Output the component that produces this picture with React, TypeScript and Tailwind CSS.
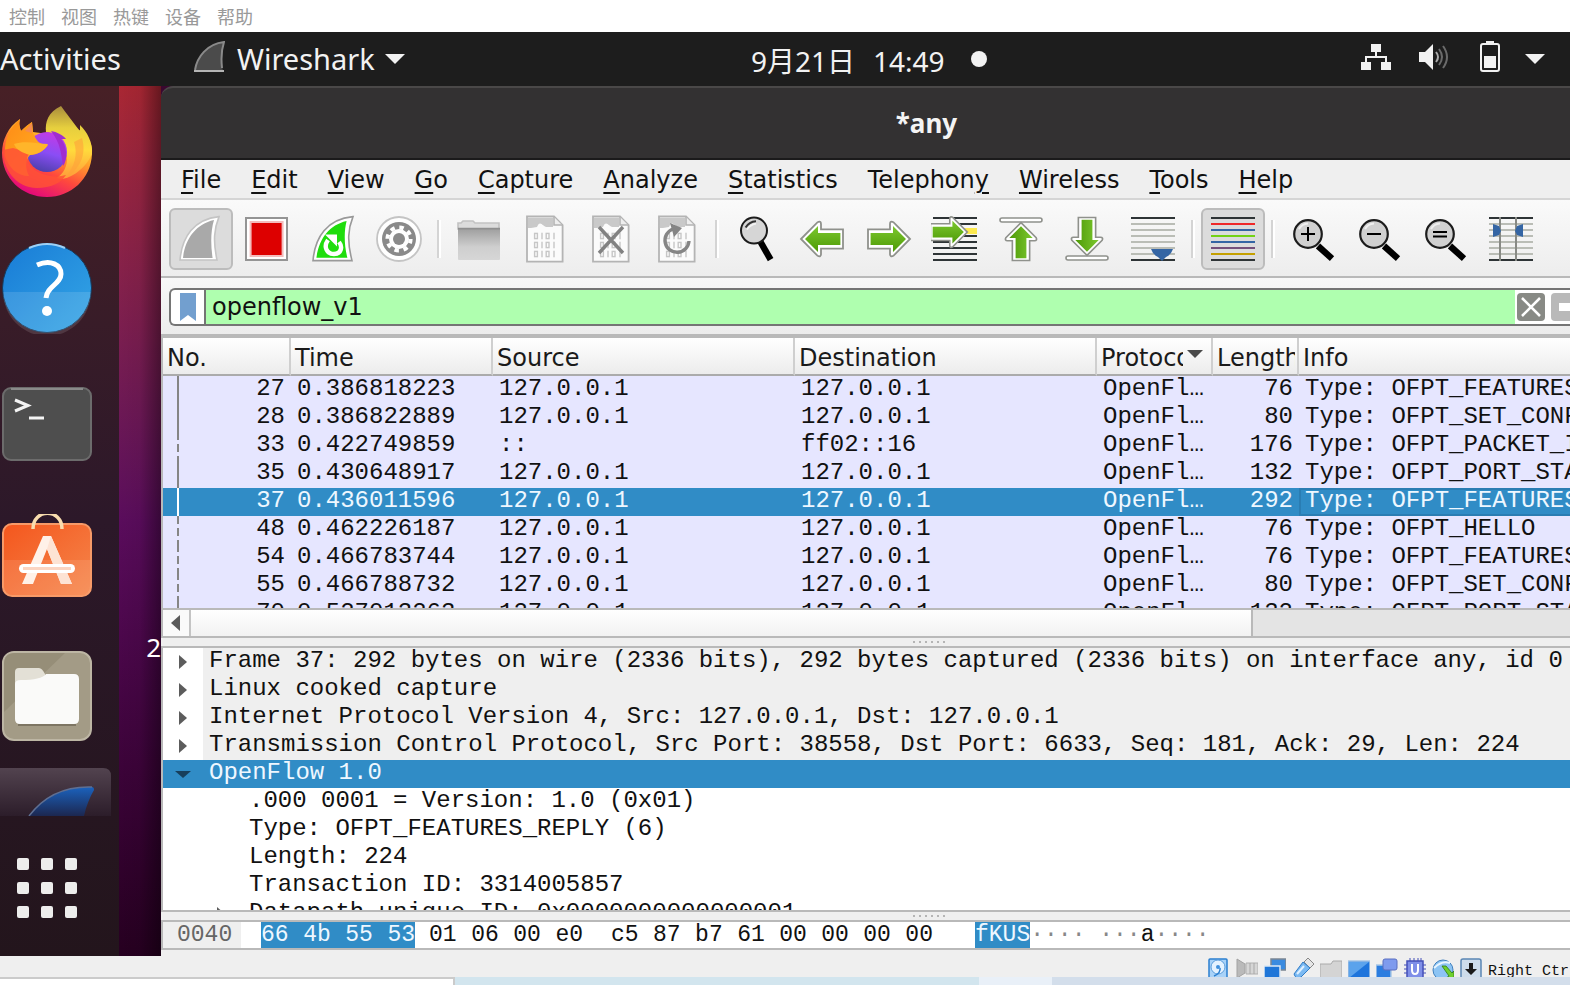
import type { ReactNode } from 'react';

const hostMenus = ['控制', '视图', '热键', '设备', '帮助'];

const menus = [
  ['', 'F', 'ile'],
  ['', 'E', 'dit'],
  ['', 'V', 'iew'],
  ['', 'G', 'o'],
  ['', 'C', 'apture'],
  ['', 'A', 'nalyze'],
  ['', 'S', 'tatistics'],
  ['Telephon', 'y', ''],
  ['', 'W', 'ireless'],
  ['', 'T', 'ools'],
  ['', 'H', 'elp'],
];

const packets = [
  { no: 27, time: '0.386818223', src: '127.0.0.1', dst: '127.0.0.1', len: 76, info: 'OFPT_FEATURES_REQUEST', solid: true },
  { no: 28, time: '0.386822889', src: '127.0.0.1', dst: '127.0.0.1', len: 80, info: 'OFPT_SET_CONFIG', solid: true },
  { no: 33, time: '0.422749859', src: '::', dst: 'ff02::16', len: 176, info: 'OFPT_PACKET_IN', solid: false },
  { no: 35, time: '0.430648917', src: '127.0.0.1', dst: '127.0.0.1', len: 132, info: 'OFPT_PORT_STATUS', solid: true },
  { no: 37, time: '0.436011596', src: '127.0.0.1', dst: '127.0.0.1', len: 292, info: 'OFPT_FEATURES_REPLY', solid: true, selected: true },
  { no: 48, time: '0.462226187', src: '127.0.0.1', dst: '127.0.0.1', len: 76, info: 'OFPT_HELLO', solid: false },
  { no: 54, time: '0.466783744', src: '127.0.0.1', dst: '127.0.0.1', len: 76, info: 'OFPT_FEATURES_REQUEST', solid: false },
  { no: 55, time: '0.466788732', src: '127.0.0.1', dst: '127.0.0.1', len: 80, info: 'OFPT_SET_CONFIG', solid: false },
  { no: 70, time: '0.527013263', src: '127.0.0.1', dst: '127.0.0.1', len: 132, info: 'OFPT_PORT_STATUS', solid: false },
];

const layers = [
  'Frame 37: 292 bytes on wire (2336 bits), 292 bytes captured (2336 bits) on interface any, id 0',
  'Linux cooked capture',
  'Internet Protocol Version 4, Src: 127.0.0.1, Dst: 127.0.0.1',
  'Transmission Control Protocol, Src Port: 38558, Dst Port: 6633, Seq: 181, Ack: 29, Len: 224',
];

const fields = [
  '.000 0001 = Version: 1.0 (0x01)',
  'Type: OFPT_FEATURES_REPLY (6)',
  'Length: 224',
  'Transaction ID: 3314005857',
];

/* ---------- dock icons ---------- */

const Firefox = () => (
  <svg viewBox="0 0 92 92" className="size-[92px]">
    <defs>
      <linearGradient id="ffBody" x1="0.85" y1="0.1" x2="0.35" y2="1">
        <stop offset="0" stopColor="#ffe23e" />
        <stop offset="0.35" stopColor="#ffa52b" />
        <stop offset="0.65" stopColor="#ff4a3c" />
        <stop offset="1" stopColor="#e2077c" />
      </linearGradient>
      <linearGradient id="ffFlame" x1="0" y1="0" x2="0" y2="1">
        <stop offset="0" stopColor="#a88c3c" />
        <stop offset="0.3" stopColor="#e6cf3e" />
        <stop offset="0.6" stopColor="#ffdb3c" />
        <stop offset="1" stopColor="#ff9a3a" />
      </linearGradient>
      <linearGradient id="ffGlobe" x1="0.6" y1="0" x2="0.3" y2="1">
        <stop offset="0" stopColor="#c43ae6" />
        <stop offset="0.5" stopColor="#8a4df5" />
        <stop offset="1" stopColor="#4b3fa8" />
      </linearGradient>
      <linearGradient id="ffHead" x1="0" y1="0" x2="1" y2="1">
        <stop offset="0" stopColor="#ff8a16" />
        <stop offset="1" stopColor="#ffb422" />
      </linearGradient>
    </defs>
    <path d="M19 13 C18 17 18 19 20 25 C24 21 28 18 31 16 L32 26 L47 28 L78 24 C87 30 92 38 91 48 C90 73 70 91 46 91 C21 91 1 72 1 47 C1 34 7 21 19 13Z" fill="url(#ffBody)" />
    <path d="M60 0 C47 6 44 16 45 26 C56 28 64 36 66 50 C67 60 62 68 56 72 C66 76 84 64 91 48 C92 36 86 26 79 19 L79 25 C71 15 66 8 60 0Z" fill="url(#ffFlame)" />
    <path d="M81 32 C86 50 78 64 64 72 C74 60 77 48 73 36Z" fill="#ffa13a" opacity="0.6" />
    <circle cx="46" cy="46" r="20" fill="url(#ffGlobe)" />
    <path d="M50 25 C56 26 62 29 65 33 L60 33 C66 40 67 54 62 60 C60 48 60 38 50 25Z" fill="#a02ed0" />
    <path d="M19 13 C9 22 3 32 4 50 C8 62 16 70 28 70 C24 62 24 54 29 49 C36 49 44 44 47 39 C38 39 35 34 32 27 L31 16 C28 18 24 21 20 25 C18 19 18 17 19 13Z" fill="url(#ffHead)" />
    <path d="M2 44 C2 62 14 82 36 82 C50 82 60 77 65 69 C52 73 34 68 28 58 C25 54 26 50 29 47 L12 42Z" fill="#ff5136" opacity="0.85" />
    <path d="M13 38 C24 34 38 38 47 38 C43 46 36 48 29 49 C22 47 15 44 13 38Z" fill="#ffb52a" />
    <path d="M31 17 L24 25 L31 27Z" fill="#f48a50" />
  </svg>
);

const Help = () => (
  <svg viewBox="0 0 92 92" className="size-[92px]">
    <defs>
      <linearGradient id="helpBg" x1="0" y1="0" x2="1" y2="1">
        <stop offset="0" stopColor="#187bd6" />
        <stop offset="1" stopColor="#34a6e6" />
      </linearGradient>
    </defs>
    <circle cx="46" cy="46" r="44.5" fill="url(#helpBg)" stroke="#173a5c" strokeWidth="1" />
    <path d="M2 50 H90 A44 44 0 0 1 2 50Z" fill="#fff" opacity="0.12" />
    <path d="M28 6 A43.500 43.500 0 0 1 64 6" fill="none" stroke="#9ed0f5" strokeWidth="2" />
    <path d="M36 23 C50 17 60 23 60 32 C60 42 46 44 45 56" fill="none" stroke="#fff" strokeWidth="5" />
    <circle cx="46" cy="69" r="5" fill="#fff" />
  </svg>
);

const Terminal = () => (
  <svg viewBox="0 0 92 92" className="size-[92px]">
    <rect x="2" y="10" width="88" height="72" rx="8" fill="#4e4e4e" stroke="#6c6c6c" strokeWidth="2" />
    <path d="M10 11 H82" stroke="#8a8a8a" strokeWidth="2" />
    <path d="M14 22 L27 27.500 L14 33" fill="none" stroke="#f4f4f4" strokeWidth="3" />
    <path d="M28 40 H43" stroke="#f4f4f4" strokeWidth="3" />
  </svg>
);

const Software = () => (
  <svg viewBox="0 0 92 92" className="size-[92px]">
    <defs>
      <linearGradient id="swBg" x1="0" y1="0" x2="1" y2="1">
        <stop offset="0" stopColor="#f4561d" />
        <stop offset="1" stopColor="#f5874c" />
      </linearGradient>
    </defs>
    <rect x="2" y="10" width="88" height="72" rx="9" fill="url(#swBg)" stroke="#f79a68" strokeWidth="2" />
    <path d="M3 46 H89 V74 Q89 81 81 81 H11 Q3 81 3 74Z" fill="#fff" opacity="0.1" />
    <path d="M32 15 C32 -6 61 -6 61 15" fill="none" stroke="#f8dcae" strokeWidth="3.500" />
    <path d="M42 22 H50 L71 70 H60 L46 35 L32 70 H21Z" fill="#fff1e8" />
    <path d="M50 22 L71 70 H60 L46 35Z" fill="#fde3d4" />
    <rect x="18" y="50" width="56" height="9" rx="4.500" fill="#fff" />
    <rect x="22" y="53" width="48" height="3" fill="#fbd5c2" />
  </svg>
);

const Files = () => (
  <svg viewBox="0 0 92 92" className="size-[92px]">
    <rect x="2" y="2" width="88" height="88" rx="11" fill="#a39b86" stroke="#bdb6a4" strokeWidth="2" />
    <path d="M3 62 L64 3 H14 Q3 3 3 14Z" fill="#968e78" />
    <path d="M14 40 V22 Q14 18 18 18 H38 Q41 18 44 24 V40Z" fill="#e3e0d6" />
    <path d="M14 34 Q14 30 20 30 Q40 30 45 24 H73 Q78 24 78 29 V69 Q78 74 73 74 H19 Q14 74 14 69Z" fill="#fafaf9" />
    <path d="M17 75 H75" stroke="#7d7563" strokeWidth="2" />
  </svg>
);

const DockFin = () => (
  <svg viewBox="0 0 111 48" className="h-12 w-[111px]">
    <defs>
      <linearGradient id="dockTile" x1="0" y1="0" x2="0" y2="1">
        <stop offset="0" stopColor="#52434f" />
        <stop offset="1" stopColor="#2c1d2a" />
      </linearGradient>
      <linearGradient id="dockFin" x1="0" y1="0" x2="0" y2="1">
        <stop offset="0" stopColor="#1b62bd" />
        <stop offset="1" stopColor="#1c2750" />
      </linearGradient>
    </defs>
    <path d="M0 0 H103 Q111 0 111 8 V48 H0Z" fill="url(#dockTile)" />
    <path d="M29 48 C44 28 66 18 92 19 Q94 19 94 22 C90 29 86 38 84 48Z" fill="url(#dockFin)" />
    <path d="M29 48 C44 28 66 18 92 19" fill="none" stroke="#5f6f92" strokeWidth="1.500" />
  </svg>
);

const AppGrid = () => (
  <svg viewBox="0 0 62 62" className="size-[62px]" fill="#ededec">
    {[0, 24, 48].map((y) => [0, 24, 48].map((x) => <rect key={`${x}-${y}`} x={x + 1} y={y + 1} width="12" height="12" rx="2" />))}
  </svg>
);

/* ---------- toolbar icons, drawn on a 24 unit grid ---------- */

const Icon = ({ children }: { children: ReactNode }) => (
  <svg viewBox="0 0 24 24" className="size-12" fill="none">
    {children}
  </svg>
);

const finPath = 'M1.500 22.500 C2.500 11 8.500 2 21 0.800 C18.500 7 18 13 20 22.500Z';
const arrowPath = 'M1.500 12 L9.800 3.600 Q11.500 2.800 11.500 4.500 V7.200 H22.500 V16.800 H11.500 V19.500 Q11.500 21.200 9.800 20.400Z';
const arrowInner = 'M3.500 12 L10 5.500 V9 H21.200 V15 H10 V18.500Z';

const Arrow = ({ transform }: { transform?: string }) => (
  <g transform={transform}>
    <path d={arrowPath} fill="#fff" stroke="#8f918c" strokeWidth="0.9" />
    <path d={arrowInner} fill="url(#green)" />
  </g>
);

const Doc = ({ children }: { children?: ReactNode }) => (
  <Icon>
    <path d="M3 0.700 H16.500 L20.800 5 V23.300 H3Z" fill="#fbfbfb" stroke="#b4b4b4" strokeWidth="0.9" />
    <path d="M3.500 1.200 H16 V6 H13 C11 6 9.500 2 8 6 L5 6.500 H3.500Z" fill="#c9c9c9" />
    <path d="M16.500 1 V5 H20.500" fill="#eee" stroke="#b4b4b4" strokeWidth="0.8" />
    {[9.2, 13.7, 18.2].map((y) => (
      <g key={y} stroke="#c6c6c6" strokeWidth="0.7">
        <rect x="6.800" y={y} width="1.400" height="2.600" />
        <path d={`M10.500 ${y - 0.3} v3.200`} />
        <rect x="12.600" y={y} width="1.400" height="2.600" />
        <path d={`M16.500 ${y - 0.3} v3.200`} />
      </g>
    ))}
    {children}
  </Icon>
);

const Glass = ({ children }: { children?: ReactNode }) => (
  <Icon>
    <path d="M14.500 15.500 L21.500 21.800" stroke="#000" strokeWidth="3.200" />
    <circle cx="9.500" cy="9.500" r="6.900" fill="#d0d0d0" stroke="#1c1c1c" strokeWidth="1.100" />
    <path d="M5 7 Q6.500 4.300 9.500 4.200" stroke="#efefef" strokeWidth="1" />
    <g stroke="#000" strokeWidth="1">{children}</g>
  </Icon>
);

const Lines = ({ colors }: { colors: string[] }) => (
  <>
    {colors.map((color, i) => (
      <path key={i} d={`M1 ${1.5 + i * 3} H23`} stroke={color} strokeWidth="1" />
    ))}
  </>
);

const grayLines = ['#2e3436', '#babdb6', '#babdb6', '#babdb6', '#babdb6', '#babdb6', '#babdb6', '#2e3436'];

const toolbar: { label: string; pressed?: boolean; icon: ReactNode }[][] = [
  [
    {
      label: 'Start capturing packets',
      pressed: true,
      icon: (
        <Icon>
          <path d={finPath} fill="#fff" stroke="#c4c4c4" strokeWidth="0.8" />
          <path d="M3 21.500 C4 12 9.500 4.500 18.500 2.500 C16.800 8 16.800 15 17.800 21.500Z" fill="#a9a9a9" />
        </Icon>
      ),
    },
    {
      label: 'Stop capturing packets',
      icon: (
        <Icon>
          <rect x="1.500" y="1.500" width="20.500" height="21" fill="#fff" stroke="#949494" />
          <rect x="3.800" y="3.500" width="16" height="17" fill="#d00" stroke="#f3bcbc" />
        </Icon>
      ),
    },
    {
      label: 'Restart current capture',
      icon: (
        <Icon>
          <path d="M2 22.800 C3 11 9 2 22 0.800 C19.500 7 19 13 21.500 22.800Z" fill="#fff" stroke="#999" strokeWidth="0.8" />
          <path d="M3.700 21.400 C5 12 10 5 18.800 3 C17.500 8 17.500 15 19.200 21.400Z" fill="#1fdd0d" />
          <path d="M9.500 12.500 C7 16 9 19.500 12.500 19.500 C16 19.500 17 16 15 13.500" stroke="#fff" strokeWidth="2.200" />
          <path d="M8 9.800 H14 V15.800Z" fill="#fff" />
        </Icon>
      ),
    },
    {
      label: 'Capture options',
      icon: (
        <Icon>
          <circle cx="12" cy="12" r="11" fill="#fff" stroke="#c4c4c4" strokeWidth="0.9" />
          <circle cx="12" cy="12" r="8.500" fill="#8a8a8a" />
          <circle cx="12" cy="12" r="5" fill="#fff" />
          <circle cx="12" cy="12" r="5.800" stroke="#fff" strokeWidth="2" strokeDasharray="2.200 2.355" />
          <circle cx="12" cy="12" r="3" fill="#8a8a8a" />
        </Icon>
      ),
    },
  ],
  [
    {
      label: 'Open a capture file',
      icon: (
        <Icon>
          <path d="M1.500 7 V4 H3 L4 3 H9 L10 4 H22 V7Z" fill="#dcdcdc" stroke="#c2c2c2" strokeWidth="0.800" />
          <rect x="1.500" y="6.500" width="21" height="16" rx="0.500" fill="url(#folder)" />
          <path d="M1.500 6.800 H22.500" stroke="#8f8f8f" strokeWidth="0.800" />
        </Icon>
      ),
    },
    { label: 'Save this capture file', icon: <Doc /> },
    {
      label: 'Close this capture file',
      icon: (
        <Doc>
          <path d="M6 6 L18 19 M18 6 L6 19" stroke="#828282" strokeWidth="1.700" />
        </Doc>
      ),
    },
    {
      label: 'Reload this file',
      icon: (
        <Doc>
          <path d="M10 7 A6 6 0 1 0 18 13" stroke="#858585" strokeWidth="1.700" />
          <path d="M8.500 4 L14.500 6.500 L10.500 11Z" fill="#858585" />
        </Doc>
      ),
    },
  ],
  [
    {
      label: 'Find a packet',
      icon: (
        <Icon>
          <path d="M13.500 13 L18.800 22.300" stroke="#000" strokeWidth="3.200" />
          <circle cx="10.500" cy="7.800" r="6.500" fill="#d6d6d6" stroke="#1c1c1c" strokeWidth="1" />
          <path d="M6.300 6.300 Q8 3.300 11.500 3.100" stroke="#333" strokeWidth="1" />
          <path d="M7 7.300 Q8.500 4.800 11.500 4.300" stroke="#f3f3f3" strokeWidth="0.800" />
        </Icon>
      ),
    },
    { label: 'Go back in packet history', icon: <Icon><Arrow transform="translate(-0.500 0)" /></Icon> },
    { label: 'Go forward in packet history', icon: <Icon><Arrow transform="matrix(-1 0 0 1 24 0)" /></Icon> },
    {
      label: 'Go to specified packet',
      icon: (
        <Icon>
          <Lines colors={['#2e3436', '#2e3436', '#fce94f', '#2e3436', '#2e3436', '#2e3436', '#2e3436', '#2e3436']} />
          <path d="M14 8 H23" stroke="#fce94f" strokeWidth="3" />
          <Arrow transform="matrix(-0.880 0 0 0.880 19.500 -2)" />
        </Icon>
      ),
    },
    {
      label: 'Go to the first packet',
      icon: (
        <Icon>
          <rect x="1.500" y="1.500" width="21" height="2" rx="1" fill="#fff" stroke="#8f918c" strokeWidth="0.800" />
          <Arrow transform="matrix(0 0.900 -0.900 0 22.800 2.500)" />
        </Icon>
      ),
    },
    {
      label: 'Go to the last packet',
      icon: (
        <Icon>
          <rect x="1.500" y="20.500" width="21" height="2" rx="1" fill="#fff" stroke="#8f918c" strokeWidth="0.800" />
          <Arrow transform="matrix(0 -0.900 -0.900 0 22.800 21.500)" />
        </Icon>
      ),
    },
    {
      label: 'Auto scroll in live capture',
      icon: (
        <Icon>
          <Lines colors={grayLines} />
          <path d="M11 17 H22 Q21 20 18.500 21 L16.500 23 L14.500 21 Q12 20 11 17Z" fill="#3465a4" />
        </Icon>
      ),
    },
  ],
  [
    {
      label: 'Colorize packet list',
      pressed: true,
      icon: (
        <Icon>
          <Lines colors={['#2e3436', '#ef2929', '#3465a4', '#73d216', '#3465a4', '#75507b', '#c4a000', '#2e3436']} />
        </Icon>
      ),
    },
  ],
  [
    { label: 'Zoom in', icon: <Glass><path d="M6 9.500 H13 M9.500 6 V13" /></Glass> },
    { label: 'Zoom out', icon: <Glass><path d="M6 9.500 H13" /></Glass> },
    { label: 'Normal size', icon: <Glass><path d="M6 8.500 H13 M6 10.800 H13" /></Glass> },
    {
      label: 'Resize columns',
      icon: (
        <Icon>
          <Lines colors={grayLines} />
          <path d="M6.500 1 V23 M14.500 1 V23" stroke="#888a85" strokeWidth="1" />
          <path d="M3 4.500 L6 5.500 L7 8 L6 10 L3 11Z M18 4.500 L15 5.500 L14 8 L15 10 L18 11Z" fill="#3465a4" />
        </Icon>
      ),
    },
  ],
];

/* ---------- host status icons ---------- */

const statusIcons: { label: string; icon: ReactNode }[] = [
  {
    label: 'Hard disks',
    icon: (
      <>
        <rect x="1" y="1" width="18" height="22" rx="1" fill="#a8d2f8" stroke="#2a7fd0" strokeWidth="1.500" />
        <circle cx="10" cy="9" r="7" fill="#e4f2ff" stroke="#5c9edc" />
        <circle cx="10" cy="9" r="2" fill="#3f8fdc" />
        <path d="M12 10 Q13 15 6 18" stroke="#2a7fd0" strokeWidth="1.500" />
      </>
    ),
  },
  {
    label: 'Audio',
    icon: (
      <>
        <path d="M1 1 L9 6 V15 L1 20Z" fill="#bababa" stroke="#a2a2a2" />
        <path d="M10 5 H22 V16 H10Z" fill="#d6d6d6" stroke="#b0b0b0" />
        <path d="M14 5 V16 M18 5 V16" stroke="#a8a8a8" />
      </>
    ),
  },
  {
    label: 'Network',
    icon: (
      <>
        <rect x="7" y="1" width="15" height="11" fill="#3a8be0" stroke="#7c8793" strokeWidth="1.500" />
        <rect x="0" y="8" width="16" height="12" fill="#1f76d8" stroke="#dce9f5" strokeWidth="1.500" />
      </>
    ),
  },
  {
    label: 'USB',
    icon: (
      <>
        <path d="M12 4 L16 0 L22 6 L18 10Z" fill="#e6e6e6" stroke="#888" />
        <path d="M2 16 L11 4 L18 10 L9 19 Q4 22 2 16Z" fill="#7ab9f2" stroke="#2f7cc7" />
        <path d="M5 16 L12 8" stroke="#dff0ff" strokeWidth="2" />
      </>
    ),
  },
  {
    label: 'Shared folders',
    icon: <path d="M0 20 V6 H11 L13 3 H22 V20Z" fill="#d4d4d4" stroke="#aaa" />,
  },
  {
    label: 'Display',
    icon: (
      <>
        <rect x="0" y="3" width="22" height="19" fill="#1d74dc" stroke="#a9c7e6" strokeWidth="1.500" />
        <path d="M1 20 V4 H21Z" fill="#5ba3ec" />
      </>
    ),
  },
  {
    label: 'Recording',
    icon: (
      <>
        <rect x="0" y="7" width="15" height="14" fill="#2b7de0" stroke="#a9c7e6" strokeWidth="1.500" />
        <rect x="7" y="1" width="14" height="11" rx="2" fill="#7f9bee" stroke="#5a6fc0" />
      </>
    ),
  },
  {
    label: 'CPU features',
    icon: (
      <>
        <rect x="3" y="3" width="16" height="18" fill="#7f8fe8" stroke="#4450b8" strokeWidth="1.500" />
        <path d="M6 0 V3 M10 0 V3 M14 0 V3 M17 0 V3 M0 7 H3 M0 11 H3 M0 15 H3 M19 7 H22 M19 11 H22 M19 15 H22" stroke="#4450b8" />
        <path d="M8 6 V12 Q8 16 11 16 Q14 16 14 12 V6" stroke="#fff" strokeWidth="2" />
      </>
    ),
  },
  {
    label: 'Mouse integration',
    icon: (
      <>
        <circle cx="11" cy="12" r="10" fill="#8cc4f4" stroke="#3f7fbd" />
        <path d="M2 10 Q10 2 18 5" stroke="#e8f5ff" strokeWidth="2" />
        <path d="M10 8 L14 8 L20 15 L22 13 V20 H14 L17 18Z" fill="#6fd02f" stroke="#2d7a12" strokeWidth="0.800" />
      </>
    ),
  },
  {
    label: 'Keyboard capture',
    icon: (
      <>
        <rect x="1" y="1" width="20" height="22" rx="2" fill="#cddceb" stroke="#5b87b5" strokeWidth="1.500" />
        <path d="M9 5 H13 V11 H17 L11 17 L5 11 H9Z" fill="#1a1a1a" />
      </>
    ),
  },
];

const Connector = ({ solid, selected }: { solid: boolean; selected?: boolean }) => (
  <svg viewBox="0 0 2 28" className="h-7 w-0.5" stroke={selected ? '#fff' : '#858585'} strokeWidth="2">
    <path d={solid ? 'M1 0 V28' : 'M1 0 V8 M1 12 V20 M1 24 V28'} />
  </svg>
);

const Splitter = () => (
  <div className="flex h-2 shrink-0 items-center justify-center bg-[#efefef] pl-32">
    <svg viewBox="0 0 34 2" className="h-0.5 w-[34px]" fill="#b5b5b5">
      {[0, 6, 12, 18, 24, 30].map((x) => <rect key={x} x={x} width="2" height="2" />)}
    </svg>
  </div>
);

const Expander = ({ open }: { open?: boolean }) => (
  <svg viewBox="0 0 16 16" className="size-4" fill={open ? '#173f5c' : '#5c5c5c'}>
    <path d={open ? 'M0 5 H16 L8 12Z' : 'M4 1 L12 8 L4 15Z'} />
  </svg>
);

const Th = ({ children }: { children: ReactNode }) => (
  <th className="overflow-hidden border-r-2 border-b-2 border-r-[#cfcfcf] border-b-[#ababab] bg-linear-to-b from-white to-[#ececec] pt-1 pl-1 text-left font-normal last:border-r-0">
    {children}
  </th>
);

export default function App() {
  return (
    <div className="flex h-screen flex-col overflow-hidden bg-[#efefef] font-['DejaVu_Sans',sans-serif]">
      {/* Defs shared by the toolbar icons */}
      <svg className="absolute size-0" aria-hidden="true">
        <defs>
          <linearGradient id="green" x1="0" y1="0" x2="0" y2="1">
            <stop offset="0" stopColor="#7cc82f" />
            <stop offset="1" stopColor="#4e9a06" />
          </linearGradient>
          <linearGradient id="folder" x1="0" y1="0" x2="0" y2="1">
            <stop offset="0" stopColor="#9d9d9d" />
            <stop offset="0.6" stopColor="#cfcfcf" />
            <stop offset="1" stopColor="#d6d6d6" />
          </linearGradient>
        </defs>
      </svg>

      {/* Host menu */}
      <nav className="flex h-8 shrink-0 items-center gap-4 bg-white px-[9px] font-['Noto_Sans_CJK_SC',sans-serif] text-[18px] leading-6 text-[#999]">
        {hostMenus.map((name) => <button key={name}>{name}</button>)}
      </nav>

      {/* Gnome top bar */}
      <header className="flex h-[54px] shrink-0 items-center bg-[#1d1d1d] font-['Noto_Sans','Noto_Sans_CJK_SC',sans-serif] text-[28px] leading-8 text-[#f2f2f2]">
        <div className="flex w-[751px] shrink-0 items-center text-[29px]">
          <button className="w-[193px] text-left">Activities</button>
          <button className="flex items-center">
            <svg viewBox="0 0 32 32" className="mr-3 mb-1 size-8">
              <path d="M2 30 C4 16 14 3 31 1 C28 10 28 20 30 30Z" fill="#4b4b4b" />
              <path d="M2 29 C4 16 14 3 31 1 C28 10 28 18 29 27" fill="none" stroke="#8a8a8a" strokeWidth="2" />
              <path d="M1 30 H31" stroke="#b5b5b5" strokeWidth="2" />
            </svg>
            Wireshark
            <svg viewBox="0 0 20 10" className="ml-2.5 h-2.5 w-5" fill="#f2f2f2"><path d="M0 0 H20 L10 10Z" /></svg>
          </button>
        </div>
        <button className="flex items-center gap-[18px] whitespace-nowrap pt-1">
          <span>9月21日</span>
          <span>14:49</span>
          <span className="mb-1 ml-2 size-4 rounded-full bg-[#f2f2f2]" />
        </button>
        <button className="ml-auto flex items-center pr-[25px]" aria-label="System menu">
          <svg viewBox="0 0 30 28" className="mr-7 mb-1 h-7 w-[30px]" fill="#f2f2f2">
            <path d="M10 1 H20 V9 H10Z M0 19 H10 V27 H0Z M20 19 H30 V27 H20Z" />
            <path d="M15 8 V14 M5 20 V14 H25 V20" fill="none" stroke="#f2f2f2" strokeWidth="2" />
          </svg>
          <svg viewBox="0 0 30 28" className="mr-[30px] mb-1 h-7 w-[30px]">
            <path d="M0 9 H6 L14 1 V27 L6 19 H0Z" fill="#f2f2f2" />
            <path d="M17 9 Q21 14 17 19" fill="none" stroke="#aaa" strokeWidth="2" />
            <path d="M20 6 Q26 14 20 22 M24 3 Q32 14 24 25" fill="none" stroke="#6b6b6b" strokeWidth="2" />
          </svg>
          <svg viewBox="0 0 22 32" className="mr-6 mb-1 h-8 w-[22px]">
            <path d="M7 0 H15 V3 H7Z" fill="#f2f2f2" />
            <rect x="2" y="3" width="18" height="27" rx="2" fill="none" stroke="#f2f2f2" strokeWidth="2" />
            <rect x="5" y="15" width="12" height="12" fill="#f2f2f2" />
          </svg>
          <svg viewBox="0 0 20 10" className="h-2.5 w-5" fill="#f2f2f2"><path d="M0 0 H20 L10 10Z" /></svg>
        </button>
      </header>

      <div className="flex min-h-0 flex-1">
        {/* Dock */}
        <aside className="flex w-[119px] shrink-0 flex-col gap-1.5 bg-linear-to-b from-[#472026] via-[#2c1829] to-[#23151c] pt-px">
          <button aria-label="Firefox" className="flex h-[130px] items-center pl-px"><Firefox /></button>
          <button aria-label="Help" className="flex h-[130px] items-center pl-px"><Help /></button>
          <button aria-label="Terminal" className="flex h-[130px] items-center pl-px"><Terminal /></button>
          <button aria-label="Ubuntu Software" className="flex h-[130px] items-center pl-px"><Software /></button>
          <button aria-label="Files" className="flex h-[130px] items-center pl-px"><Files /></button>
          <button aria-label="Wireshark" className="pt-px"><DockFin /></button>
          <button aria-label="Show applications" className="mt-auto pb-[37px] pl-4"><AppGrid /></button>
        </aside>

        {/* Desktop */}
        <div className="w-[42px] shrink-0 bg-linear-to-b from-[#a92733] via-[#5a0c5c] to-[#260020]">
          <div className="flex h-full items-end justify-end bg-linear-to-r from-transparent via-black/5 to-black/40 pb-[293px] font-['Noto_Sans',sans-serif] text-[26px] leading-8 text-white">2</div>
        </div>

        {/* Wireshark window */}
        <main className="flex min-w-0 flex-1 flex-col bg-[#efefef]">
          <div className="bg-[#3a0830]">
            <h1 className="h-[74px] rounded-tl-xl border-t-2 border-b-2 border-t-[#4a4848] border-b-[#1b1a1b] bg-[#333132] pl-[122px] text-center font-['Noto_Sans',sans-serif] text-[26px] leading-[70px] font-bold text-[#f4f4f4]">*any</h1>
          </div>

          <nav className="flex h-10 shrink-0 items-center gap-[30px] border-b-2 border-[#d5d5d5] pt-0.5 pl-5 text-[24px] leading-7 text-[#111]">
            {menus.map(([before, key, after]) => (
              <button key={before + key + after}>
                {before}
                <span className="underline decoration-2 underline-offset-4">{key}</span>
                {after}
              </button>
            ))}
          </nav>

          <div className="flex h-[78px] shrink-0 items-center gap-0.5 border-b-2 border-[#b9b9b9] bg-linear-to-b from-[#fafafa] to-[#ededed] pt-0.5 pl-2">
            {toolbar.map((group, g) => (
              <div key={g} className="flex items-center gap-0.5">
                {g > 0 && (
                  <div className="flex w-3 justify-center">
                    <div className="h-[38px] w-1 border-r-2 border-l-2 border-l-[#d4d4d4] border-r-white" />
                  </div>
                )}
                {group.map((tool) => (
                  <button
                    key={tool.label}
                    aria-label={tool.label}
                    className={`flex h-[62px] w-16 items-center justify-center rounded-md border-2 ${tool.pressed ? 'border-[#bcbcbc] bg-[#dcdcdc]' : 'border-transparent'}`}
                  >
                    {tool.icon}
                  </button>
                ))}
              </div>
            ))}
          </div>

          {/* Display filter */}
          <div className="flex h-14 shrink-0 bg-linear-to-b from-[#f8f8f8] to-[#ececec] pt-2.5 pl-2">
            <div className="flex h-[38px] flex-1 items-center rounded-l-md border-y-2 border-l-2 border-[#757575] bg-white">
              <button aria-label="Filter bookmarks" className="flex w-[33px] justify-center">
                <svg viewBox="0 0 16 28" className="h-7 w-4"><path d="M0 0 H16 V28 L8 22 L0 28Z" fill="#729fcf" /></svg>
              </button>
              <input
                aria-label="Display filter"
                defaultValue="openflow_v1"
                className="h-full min-w-0 flex-1 border-l-2 border-[#757575] bg-[#afffaf] pl-1.5 text-[24px] text-[#111] outline-none"
              />
              <button aria-label="Clear filter" className="ml-0.5 flex size-7 items-center justify-center rounded-sm bg-[#888a85]">
                <svg viewBox="0 0 20 20" className="size-5" stroke="#fff" strokeWidth="2.500"><path d="M1 1 L19 19 M19 1 L1 19" /></svg>
              </button>
              <button aria-label="Apply filter" className="ml-1.5 flex h-7 w-[19px] items-center justify-end rounded-l-sm bg-[#b9b9b9]">
                <span className="h-2 w-[11px] bg-white" />
              </button>
            </div>
          </div>

          {/* Packet list */}
          <div className="h-[276px] shrink-0 overflow-hidden border-t-4 border-b-2 border-l-2 border-[#b9b9b9] bg-[#e6e6ff]">
            <table className="w-full table-fixed border-separate border-spacing-0">
              <colgroup>
                <col className="w-[128px]" />
                <col className="w-[202px]" />
                <col className="w-[302px]" />
                <col className="w-[302px]" />
                <col className="w-[116px]" />
                <col className="w-[86px]" />
                <col />
              </colgroup>
              <thead>
                <tr className="h-[38px] text-[24px] leading-7 text-[#1a1a1a]">
                  <Th>No.</Th>
                  <Th>Time</Th>
                  <Th>Source</Th>
                  <Th>Destination</Th>
                  <Th>
                    <div className="flex items-start gap-1 pr-2">
                      <span className="min-w-0 flex-1 overflow-hidden">Protocol</span>
                      <svg viewBox="0 0 16 8" className="mt-1.5 h-2 w-4" fill="#4a4a4a"><path d="M0 0 H16 L8 8Z" /></svg>
                    </div>
                  </Th>
                  <Th><div className="mr-0.5 overflow-hidden">Length</div></Th>
                  <Th>Info</Th>
                </tr>
              </thead>
              <tbody className="font-['Liberation_Mono',monospace] text-[24px] leading-[26px] whitespace-pre">
                {packets.map((p) => (
                  <tr key={p.no} className={`h-7 align-top ${p.selected ? 'bg-[#308cc6] text-[#eef7ff]' : 'text-[#111]'}`}>
                    <td className="p-0 pr-1.5 pl-3.5">
                      <div className="flex h-7 justify-between">
                        <Connector solid={p.solid} selected={p.selected} />
                        {p.no}
                      </div>
                    </td>
                    <td className="p-0 pl-1.5">{p.time}</td>
                    <td className="p-0 pl-1.5">{p.src}</td>
                    <td className="p-0 pl-1.5">{p.dst}</td>
                    <td className="p-0 pl-1.5">OpenFl…</td>
                    <td className="p-0 pr-1.5 text-right">{p.len}</td>
                    <td className={`overflow-hidden p-0 pl-1.5 ${p.selected ? 'shadow-[inset_2px_2px_0_#2a7db3,inset_0_-2px_0_#2a7db3]' : ''}`}>Type: {p.info}</td>
                  </tr>
                ))}
              </tbody>
            </table>
          </div>

          {/* Horizontal scroll bar */}
          <div className="flex h-7 shrink-0 border-b-2 border-l-2 border-[#b9b9b9] bg-[#e4e4e4]">
            <button aria-label="Scroll left" className="flex w-7 items-center justify-center border-r-2 border-[#c4c4c4] bg-[#fafafa]">
              <svg viewBox="0 0 10 16" className="h-4 w-2.5" fill="#5a5a5a"><path d="M9 0 V16 L0 8Z" /></svg>
            </button>
            <div className="w-[1062px] border-r-2 border-[#b9b9b9] bg-linear-to-b from-white to-[#f2f2f2]" />
          </div>

          <Splitter />

          {/* Packet details */}
          <div className="min-h-0 flex-1 overflow-hidden border-y-2 border-l-2 border-[#b9b9b9] bg-white font-['Liberation_Mono',monospace] text-[24px] leading-[26px] whitespace-pre text-[#111]">
            {layers.map((text) => (
              <div key={text} className="flex h-7">
                <button aria-label="Expand" className="flex w-10 shrink-0 items-center justify-center"><Expander /></button>
                <span className="flex-1 bg-[#efefef] pl-1.5">{text}</span>
              </div>
            ))}
            <div className="flex h-7 bg-[#308cc6] text-[#eef7ff]">
              <button aria-label="Collapse" className="flex w-10 shrink-0 items-center justify-center"><Expander open /></button>
              <span className="pl-1.5">OpenFlow 1.0</span>
            </div>
            {fields.map((text) => <div key={text} className="h-7 pl-[86px]">{text}</div>)}
            <div className="flex h-7">
              <button aria-label="Expand" className="flex w-[86px] shrink-0 items-center justify-end pr-5"><Expander /></button>
              Datapath unique ID: 0x0000000000000001
            </div>
          </div>

          <Splitter />

          {/* Packet bytes */}
          <div className="flex h-[30px] shrink-0 border-y-2 border-l-2 border-[#b9b9b9] bg-white font-['Liberation_Mono',monospace] text-[23px] leading-[26px] whitespace-pre text-[#111]">
            <div className="w-[78px] shrink-0 bg-[#efefef] pl-3.5 text-[#666]">0040</div>
            <div className="ml-5 flex">
              <span className="flex w-[154px] justify-between bg-[#308cc6] text-[#eef7ff]">
                {['66', '4b', '55', '53'].map((b) => <span key={b}>{b}</span>)}
              </span>
              <span className="ml-3.5 flex w-[154px] justify-between">
                {['01', '06', '00', 'e0'].map((b) => <span key={b}>{b}</span>)}
              </span>
              <span className="ml-7 flex w-[322px] justify-between">
                {['c5', '87', 'b7', '61', '00', '00', '00', '00'].map((b, i) => <span key={i}>{b}</span>)}
              </span>
            </div>
            <div className="ml-[42px] flex">
              <span className="bg-[#308cc6] text-[#eef7ff]">fKUS</span>
              <span className="text-[#888]">···· ···</span>a<span className="text-[#888]">····</span>
            </div>
          </div>
          <div className="h-1.5 shrink-0" />
        </main>
      </div>

      {/* Host status bar */}
      <footer className="flex h-[21px] shrink-0 justify-end overflow-hidden">
        <div className="flex shrink-0 gap-1.5 pt-0.5">
          {statusIcons.map((s) => (
            <svg key={s.label} viewBox="0 0 22 22" className="size-[22px]" fill="none" role="img" aria-label={s.label}>
              {s.icon}
            </svg>
          ))}
        </div>
        <span className="-mr-2 ml-1.5 pt-1 font-['Liberation_Mono',monospace] text-[15px] leading-6 whitespace-nowrap text-[#111]">Right Ctrl</span>
      </footer>
      <div className="flex h-2 shrink-0">
        <div className="w-[455px] border-t-2 border-r-2 border-[#cbcbcb] bg-white" />
        <div className="w-[524px] bg-[#d2e5ee]" />
        <div className="w-[73px] bg-[#e9f0f8]" />
        <div className="flex-1 bg-[#d3deeb]" />
      </div>
    </div>
  );
}
